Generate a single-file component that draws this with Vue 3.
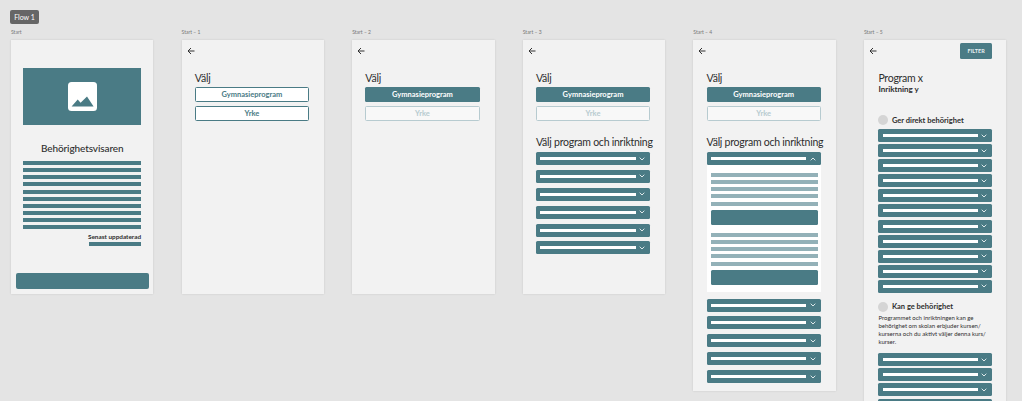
<template>
  <div class="canvas">
    <div class="flow-tag">Flow 1</div>
    <div class="frames">
      <!-- Start -->
      <section class="artboard">
        <div class="label">Start</div>
        <div class="screen start">
          <div class="hero">
            <svg width="29" height="29" viewBox="0 0 29 29">
              <rect width="29" height="29" rx="3.5" fill="#fff" />
              <path d="M3.6 24.4L9.7 17.5L12.6 20.8L19 14.4L25.6 24.4Z" fill="#4a7b85" />
            </svg>
          </div>
          <h1 class="start-title">Behörighetsvisaren</h1>
          <div class="lines">
            <div v-for="n in 10" :key="n" class="line"></div>
          </div>
          <div class="updated">Senast uppdaterad</div>
          <div class="updated-bar"></div>
          <div class="start-btn"></div>
        </div>
      </section>

      <!-- Start 1 -->
      <section class="artboard">
        <div class="label">Start – 1</div>
        <div class="screen">
          <div class="topbar">
            <svg class="back" width="8" height="8" viewBox="0 0 8 8"><path d="M7.5 4H1M4 1L1 4l3 3" fill="none" stroke="#333" stroke-width="1" /></svg>
          </div>
          <div class="body">
            <h2 class="heading">Välj</h2>
            <div class="choice outline">Gymnasieprogram</div>
            <div class="choice outline">Yrke</div>
          </div>
        </div>
      </section>

      <!-- Start 2 -->
      <section class="artboard">
        <div class="label">Start – 2</div>
        <div class="screen">
          <div class="topbar">
            <svg class="back" width="8" height="8" viewBox="0 0 8 8"><path d="M7.5 4H1M4 1L1 4l3 3" fill="none" stroke="#333" stroke-width="1" /></svg>
          </div>
          <div class="body">
            <h2 class="heading">Välj</h2>
            <div class="choice filled">Gymnasieprogram</div>
            <div class="choice faded">Yrke</div>
          </div>
        </div>
      </section>

      <!-- Start 3 -->
      <section class="artboard">
        <div class="label">Start – 3</div>
        <div class="screen">
          <div class="topbar">
            <svg class="back" width="8" height="8" viewBox="0 0 8 8"><path d="M7.5 4H1M4 1L1 4l3 3" fill="none" stroke="#333" stroke-width="1" /></svg>
          </div>
          <div class="body">
            <h2 class="heading">Välj</h2>
            <div class="choice filled">Gymnasieprogram</div>
            <div class="choice faded">Yrke</div>
            <h2 class="heading second">Välj program och inriktning</h2>
            <div class="drops wide">
              <div v-for="n in 6" :key="n" class="drop">
                <span class="drop-bar"></span>
                <svg width="6" height="4" viewBox="0 0 6 4"><path d="M.7.7L3 3l2.3-2.3" fill="none" stroke="#dfe8ea" stroke-width="1" /></svg>
              </div>
            </div>
          </div>
        </div>
      </section>

      <!-- Start 4 -->
      <section class="artboard">
        <div class="label">Start – 4</div>
        <div class="screen tall">
          <div class="topbar">
            <svg class="back" width="8" height="8" viewBox="0 0 8 8"><path d="M7.5 4H1M4 1L1 4l3 3" fill="none" stroke="#333" stroke-width="1" /></svg>
          </div>
          <div class="body">
            <h2 class="heading">Välj</h2>
            <div class="choice filled">Gymnasieprogram</div>
            <div class="choice faded">Yrke</div>
            <h2 class="heading second">Välj program och inriktning</h2>
            <div class="drop">
              <span class="drop-bar"></span>
              <svg width="6" height="4" viewBox="0 0 6 4"><path d="M.7 3.3L3 1l2.3 2.3" fill="none" stroke="#dfe8ea" stroke-width="1" /></svg>
            </div>
            <div class="panel">
              <div v-for="g in 2" :key="g" class="panel-group">
                <div class="lines">
                  <div v-for="n in 5" :key="n" class="line light"></div>
                </div>
                <div class="panel-btn"></div>
              </div>
            </div>
            <div class="drops wide after-panel">
              <div v-for="n in 5" :key="n" class="drop">
                <span class="drop-bar"></span>
                <svg width="6" height="4" viewBox="0 0 6 4"><path d="M.7.7L3 3l2.3-2.3" fill="none" stroke="#dfe8ea" stroke-width="1" /></svg>
              </div>
            </div>
          </div>
        </div>
      </section>

      <!-- Start 5 -->
      <section class="artboard">
        <div class="label">Start – 5</div>
        <div class="screen open">
          <div class="topbar with-filter">
            <svg class="back" width="8" height="8" viewBox="0 0 8 8"><path d="M7.5 4H1M4 1L1 4l3 3" fill="none" stroke="#333" stroke-width="1" /></svg>
            <div class="filter">FILTER</div>
          </div>
          <div class="body results">
            <h2 class="heading program">Program x</h2>
            <div class="sub">Inriktning y</div>
            <div class="status first">
              <span class="dot"></span>
              <span>Ger direkt behörighet</span>
            </div>
            <div class="drops tight">
              <div v-for="n in 11" :key="n" class="drop">
                <span class="drop-bar"></span>
                <svg width="6" height="4" viewBox="0 0 6 4"><path d="M.7.7L3 3l2.3-2.3" fill="none" stroke="#dfe8ea" stroke-width="1" /></svg>
              </div>
            </div>
            <div class="status">
              <span class="dot"></span>
              <span>Kan ge behörighet</span>
            </div>
            <p class="note">Programmet och inriktningen kan ge behörighet om skolan erbjuder kursen/ kurserna och du aktivt väljer denna kurs/ kurser.</p>
            <div class="drops tight">
              <div v-for="n in 4" :key="n" class="drop">
                <span class="drop-bar"></span>
                <svg width="6" height="4" viewBox="0 0 6 4"><path d="M.7.7L3 3l2.3-2.3" fill="none" stroke="#dfe8ea" stroke-width="1" /></svg>
              </div>
            </div>
          </div>
        </div>
      </section>
    </div>
  </div>
</template>

<script setup>
</script>

<style>
html,
body {
  margin: 0;
  background: #e4e4e4;
  overflow: hidden;
}
</style>

<style scoped>
.canvas {
  height: 401px;
  overflow: hidden;
  box-sizing: border-box;
  padding: 10px 0 0 11px;
  background: #e4e4e4;
  font-family: Lato, "Noto Sans", sans-serif;
  color: #2e2e2e;
}

.flow-tag {
  width: 29px;
  height: 14px;
  margin-left: -1px;
  border-radius: 2px;
  background: #666;
  color: #fff;
  font-size: 7px;
  line-height: 14px;
  text-align: center;
}

.frames {
  display: flex;
  align-items: flex-start;
  gap: 28.2px;
  margin-top: 5px;
}

.artboard {
  width: 142.4px;
  flex: none;
}

.label {
  height: 11px;
  font-size: 5px;
  line-height: 7px;
  color: #777;
}

.screen {
  height: 254px;
  box-sizing: border-box;
  background: #f2f2f2;
  box-shadow: 0 0 2px rgba(0, 0, 0, 0.12);
}

.screen.tall {
  height: 351px;
}

.screen.open {
  height: 400px;
}

/* Start screen */
.start {
  padding-top: 28px;
}

.hero {
  display: flex;
  align-items: center;
  justify-content: center;
  height: 57px;
  margin: 0 12.3px;
  background: #4a7b85;
}

.start-title {
  margin: 16px 0 6px;
  font-size: 10px;
  line-height: 14px;
  font-weight: 500;
  letter-spacing: -0.1px;
  text-align: center;
}

.start .lines {
  margin: 0 12.3px;
}

.lines {
  display: flex;
  flex-direction: column;
  gap: 3.15px;
}

.line {
  height: 4px;
  background: #4a7b85;
}

.line.light {
  background: #93b1b8;
}

.updated {
  margin: 3px 12.3px 0 0;
  font-size: 6.4px;
  line-height: 9px;
  font-weight: 700;
  text-align: right;
}

.updated-bar {
  width: 52px;
  height: 4px;
  margin: 1px 12.3px 0 auto;
  background: #4a7b85;
}

.start-btn {
  height: 16.6px;
  margin: 26.3px 4.7px 0;
  border-radius: 2px;
  background: #4a7b85;
}

/* Shared screen parts */
.topbar {
  display: flex;
  align-items: center;
  height: 22px;
  padding: 0 6px 0 5px;
}

.topbar.with-filter {
  justify-content: space-between;
  padding-right: 14.5px;
}

.back {
  display: block;
}

.body {
  padding: 9px 15px 0 13.2px;
}

.body.results {
  padding-left: 14.5px;
  padding-right: 14px;
}

.heading {
  margin: 0 0 1px;
  font-size: 10.5px;
  line-height: 15px;
  font-weight: 400;
  letter-spacing: -0.25px;
  white-space: nowrap;
}

.heading.second {
  margin-top: 14.5px;
  margin-bottom: 2px;
}

.choice {
  box-sizing: border-box;
  display: flex;
  align-items: center;
  justify-content: center;
  height: 15px;
  margin-bottom: 3.5px;
  border-radius: 1.5px;
  font-size: 7.5px;
  font-weight: 700;
}

.choice.outline {
  border: 1.3px solid #4a7b85;
  background: #fff;
  color: #4a7b85;
}

.choice.filled {
  background: #4a7b85;
  color: #fff;
}

.choice.faded {
  border: 1.3px solid #b7cbd0;
  background: #f8f8f8;
  color: #b7cbd0;
}

/* Dropdown rows */
.drops {
  display: flex;
  flex-direction: column;
}

.drops.wide {
  gap: 4.9px;
}

.drops.tight {
  gap: 2.1px;
}

.drops.after-panel {
  margin-top: 6.3px;
}

.drop {
  display: flex;
  align-items: center;
  justify-content: space-between;
  height: 13px;
  box-sizing: border-box;
  padding: 0 5px 0 4.3px;
  border-radius: 1.5px;
  background: #4a7b85;
}

.drop-bar {
  width: 95.4px;
  height: 3px;
  background: #fff;
}

.panel {
  display: flex;
  flex-direction: column;
  gap: 7.6px;
  padding: 8px 3px 7px 4px;
  background: #fff;
}

.panel-group {
  display: flex;
  flex-direction: column;
  gap: 4.4px;
}

.panel-btn {
  height: 15.4px;
  border-radius: 1.5px;
  background: #4a7b85;
}

/* Start 5 */
.filter {
  display: flex;
  align-items: center;
  justify-content: center;
  width: 31.3px;
  height: 16px;
  border-radius: 1.5px;
  background: #4a7b85;
  color: #e8f0f2;
  font-size: 5.5px;
  font-weight: 700;
}

.heading.program {
  margin-bottom: 0;
  line-height: 14px;
}

.sub {
  font-size: 8px;
  line-height: 9px;
  font-weight: 700;
}

.status {
  display: flex;
  align-items: center;
  gap: 3.5px;
  height: 10px;
  margin: 9px 0 4px;
  font-size: 7.5px;
  font-weight: 700;
}

.status.first {
  margin-top: 21px;
}

.dot {
  width: 10px;
  height: 10px;
  flex: none;
  border-radius: 50%;
  background: #d5d5d5;
}

.note {
  margin: -1.7px 0 7px;
  font-size: 6px;
  line-height: 8px;
}
</style>
